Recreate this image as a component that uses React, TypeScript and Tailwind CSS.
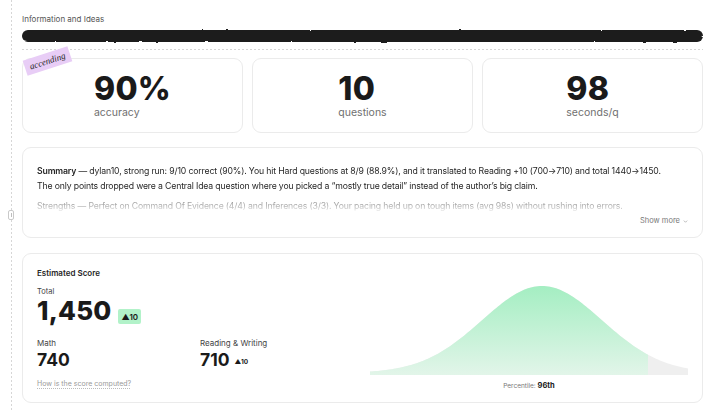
import React from "react";

const W = 318;
const H = 90;
const C = 172;
const S = 60;
const PEAK = 87;
function curvePath(): string {
  let d = `M0 ${H}`;
  for (let x = 0; x <= W; x += 2) {
    const v = Math.exp(-((x - C) * (x - C)) / (2 * S * S));
    const y = H - (PEAK * v + 2);
    d += ` L${x} ${y.toFixed(2)}`;
  }
  d += ` L${W} ${H} Z`;
  return d;
}
const PATH = curvePath();

function StatCard({ value, label, tag }: { value: string; label: string; tag?: boolean }) {
  return (
    <div className="relative flex-1 h-[75px] rounded-[9px] border border-[#ebebeb] bg-white flex items-center justify-center">
      {tag && (
        <div className="absolute left-[1px] top-[-6px] -rotate-[18deg] bg-[#e8cdf6] px-[5px] py-[3px] text-[9px] leading-[10px] text-[#222] italic font-['Liberation_Serif',serif]">
          accending
        </div>
      )}
      <div className="inline-flex flex-col items-start">
        <div className="text-[32px] leading-[32px] font-extrabold text-[#1a1a1a] tracking-[0.3px]">{value}</div>
        <div className="mt-[1px] text-[10.5px] leading-[13px] text-[#6f6f6f]">{label}</div>
      </div>
    </div>
  );
}

export default function App() {
  return (
    <div className="w-[720px] h-[412px] overflow-hidden bg-white flex font-['Inter',sans-serif] text-[#1a1a1a]">
      <svg width="0" height="0" className="absolute">
        <filter id="rough">
          <feTurbulence type="fractalNoise" baseFrequency="0.12" numOctaves="2" seed="3" />
          <feDisplacementMap in="SourceGraphic" scale="2" />
        </filter>
      </svg>

      {/* left gutter */}
      <div className="relative w-[22px] shrink-0 flex justify-center">
        <div className="w-px h-full bg-[linear-gradient(to_bottom,#d6d6d6_50%,transparent_50%)] bg-[length:1px_4px]" />
        <div className="absolute left-[8px] top-[210px] w-[6px] h-[10px] rounded-[2px] border border-[#c9c9c9] bg-white flex items-center justify-center">
          <div className="w-px h-[4px] bg-[#bdbdbd]" />
        </div>
      </div>

      {/* main */}
      <div className="w-[681px] flex flex-col pt-[14px]">
        <div className="text-[8px] leading-[11px] text-[#555]">Information and Ideas</div>
        <div className="mt-[5px] h-[12px] grid">
          <div className="[grid-area:1/1] rounded-full bg-[#1b1b1b] [filter:url(#rough)]" />
          <div className="[grid-area:1/1] flex items-center justify-end pr-[5px]">
            <span className="text-[7px] font-bold text-white tracking-[-0.3px] leading-none">10/10</span>
          </div>
        </div>
        <div className="mt-[7px] h-px bg-[linear-gradient(to_right,#d6d6d6_50%,transparent_50%)] bg-[length:4px_1px]" />

        <div className="mt-[8px] flex gap-[9px]">
          <StatCard value="90%" label="accuracy" tag />
          <StatCard value="10" label="questions" />
          <StatCard value="98" label="seconds/q" />
        </div>

        {/* summary */}
        <div className="mt-[14px] h-[91px] rounded-[9px] border border-[#ebebeb] px-[14px] pt-[16px] flex flex-col">
          <div className="h-[49px] overflow-hidden text-[8.7px] tracking-[-0.15px] leading-[15px] text-[#262626] [mask-image:linear-gradient(to_bottom,black_0%,black_64%,rgba(0,0,0,0.5)_72%,rgba(0,0,0,0.35)_86%,transparent_100%)]">
            <p>
              <span className="font-semibold">Summary</span> — dylan10, strong run: 9/10 correct (90%). You hit Hard questions at 8/9 (88.9%), and it translated to Reading +10 (700→710) and total 1440→1450.
              <br />
              The only points dropped were a Central Idea question where you picked a “mostly true detail” instead of the author’s big claim.
            </p>
            <p className="mt-[5px]">
              <span>Strengths</span> — Perfect on Command Of Evidence (4/4) and Inferences (3/3). Your pacing held up on tough items (avg 98s) without rushing into errors.
            </p>
          </div>
          <div className="mt-[3px] flex justify-end items-center gap-[3px] text-[7.5px] leading-[10px] text-[#777]">
            <span>Show more</span>
            <svg width="5" height="3" viewBox="0 0 6 4" fill="none">
              <path d="M0.8 0.8 L3 3 L5.2 0.8" stroke="#999" strokeWidth="0.9" />
            </svg>
          </div>
        </div>

        {/* estimated score */}
        <div className="mt-[15px] h-[150px] rounded-[9px] border border-[#ebebeb] px-[14px] flex">
          <div className="w-[333px] flex flex-col pt-[14px]">
            <div className="text-[8px] leading-[11px] font-semibold text-[#262626]">Estimated Score</div>
            <div className="mt-[7px] text-[7.5px] leading-[11px] text-[#444]">Total</div>
            <div className="flex items-end gap-[7px]">
              <span className="text-[26px] leading-[27px] font-extrabold tracking-[0.2px] text-[#1a1a1a]">1,450</span>
              <span className="h-[15px] px-[3px] rounded-[2px] bg-[#b2f2c9] flex items-center text-[8px] font-semibold text-[#1a1a1a]">▲10</span>
            </div>
            <div className="mt-[14px] flex">
              <div className="w-[163px]">
                <div className="text-[8px] leading-[11px] text-[#444]">Math</div>
                <div className="text-[17.5px] leading-[21px] font-bold text-[#1a1a1a]">740</div>
              </div>
              <div>
                <div className="text-[8px] leading-[11px] text-[#444]">Reading &amp; Writing</div>
                <div className="flex items-end gap-[5px]">
                  <span className="text-[17.5px] leading-[21px] font-bold text-[#1a1a1a]">710</span>
                  <span className="mb-[4px] text-[6.5px] leading-[8px] font-bold text-[#1a1a1a]">▲10</span>
                </div>
              </div>
            </div>
            <div className="mt-[9px] text-[7px] leading-[10px] text-[#9a9a9a] underline decoration-dotted underline-offset-2 decoration-[#bbb] self-start">
              How is the score computed?
            </div>
          </div>
          <div className="flex-1 flex flex-col items-center pt-[31px]">
            <svg width={W} height={H} viewBox={`0 0 ${W} ${H}`} className="block">
              <defs>
                <linearGradient id="g" x1="0" y1="0" x2="0" y2="1">
                  <stop offset="0" stopColor="#a4eec2" />
                  <stop offset="1" stopColor="#e2f5e9" />
                </linearGradient>
                <clipPath id="c">
                  <rect x="0" y="0" width="278" height={H} />
                </clipPath>
              </defs>
              <path d={PATH} fill="#efefef" />
              <path d={PATH} fill="url(#g)" clipPath="url(#c)" />
            </svg>
            <div className="mt-[6px] text-[6.5px] leading-[10px] text-[#777]">
              Percentile: <span className="text-[7.5px] font-bold text-[#1a1a1a]">96th</span>
            </div>
          </div>
        </div>
      </div>
    </div>
  );
}
